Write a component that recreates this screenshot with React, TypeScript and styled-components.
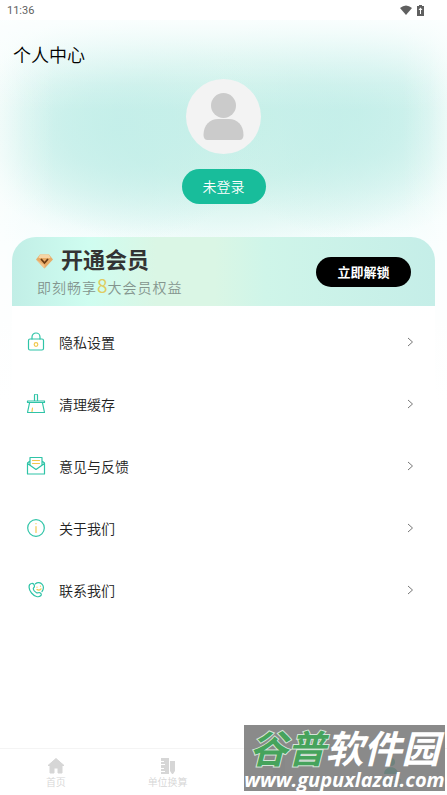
import React from 'react';
import styled, { createGlobalStyle } from 'styled-components';

const GlobalStyle = createGlobalStyle`
  *, *::before, *::after { box-sizing: border-box; }
  html, body, #root { margin: 0; min-height: 100vh; }
  body {
    background: #fff;
    color: #111;
    font-family: Roboto, "Noto Sans CJK SC", sans-serif;
    font-weight: 350;
  }
  button { border: 0; padding: 0; font: inherit; cursor: pointer; }
  a { color: inherit; text-decoration: none; }
  h1, h2, p { margin: 0; }
`;

const Screen = styled.div`
  position: relative;
  min-height: 100vh;
  display: flex;
  flex-direction: column;
`;

const StatusBar = styled.header`
  height: 20px;
  padding: 0 23px 0 7px;
  display: flex;
  align-items: center;
  justify-content: space-between;
  background: #fff;
  color: #5f5f5f;
  font-size: 11px;
  font-weight: 400;
`;

const StatusIcons = styled.div`
  display: flex;
  align-items: center;
  gap: 5px;
`;

const Main = styled.main`
  flex: 1;
  background:
    linear-gradient(180deg, rgba(252, 255, 255, 0.9), rgba(252, 255, 255, 0.5) 32px, rgba(252, 255, 255, 0.15) 65px, rgba(252, 255, 255, 0) 90px),
    linear-gradient(90deg, rgba(255, 255, 255, 0.5), rgba(255, 255, 255, 0.2) 24px, rgba(255, 255, 255, 0) 55px),
    linear-gradient(270deg, rgba(255, 255, 255, 0.5), rgba(255, 255, 255, 0.2) 18px, rgba(255, 255, 255, 0) 44px),
    radial-gradient(ellipse 34% 115px at 26% 108px, rgba(194, 238, 233, 0.8), rgba(194, 238, 233, 0.65) 35%, rgba(194, 238, 233, 0.25) 72%, rgba(194, 238, 233, 0)),
    radial-gradient(ellipse 34% 130px at 80% 90px, rgba(194, 238, 233, 0.8), rgba(194, 238, 233, 0.65) 35%, rgba(194, 238, 233, 0.25) 72%, rgba(194, 238, 233, 0)),
    radial-gradient(ellipse 56% 135px at 51% 100px, rgba(196, 239, 230, 0.9), rgba(196, 239, 230, 0.75) 45%, rgba(196, 239, 230, 0.3) 78%, rgba(196, 239, 230, 0)),
    linear-gradient(180deg, #eefaf8, #effbf9 140px, #f8fefe 225px, #fcfefe 300px, #fff 380px);
`;

const Title = styled.h1`
  padding: 22px 13px 0;
  font-size: 18px;
  line-height: 28px;
  font-weight: 350;
  color: #000;
`;

const Profile = styled.section`
  display: flex;
  flex-direction: column;
  align-items: center;
  gap: 15px;
  padding-top: 9px;
`;

const LoginButton = styled.button`
  width: 84px;
  height: 35px;
  border-radius: 18px;
  background: #18bd9b;
  color: #fff;
  font-size: 14px;
  line-height: 34px;
  font-weight: 350;
`;

const Card = styled.section`
  margin: 33px 12px 0;
  border-radius: 24px 24px 0 0;
  overflow: hidden;
`;

const Banner = styled.div`
  height: 69px;
  padding: 0 24px;
  display: flex;
  align-items: center;
  justify-content: space-between;
  background: linear-gradient(90deg, #c1eee6, #cffdf0 18%, #daf6e5 34%, #daf6e5 48%, #cff5e9 60%, #c5eee8);
`;

const Offer = styled.div`
  display: flex;
  flex-direction: column;
  padding-top: 2px;
`;

const OfferTitle = styled.h2`
  display: flex;
  align-items: center;
  gap: 8px;
  font-size: 22px;
  line-height: 28px;
  font-weight: 700;
  color: #333;
`;

const OfferText = styled.p`
  padding-left: 1px;
  font-size: 14px;
  line-height: 20px;
  color: #84958e;
  letter-spacing: 1px;
`;

const Count = styled.span`
  font-family: "Noto Sans CJK SC", sans-serif;
  font-size: 19px;
  font-weight: 400;
  line-height: 20px;
  color: #e0cc60;
  letter-spacing: 0;
`;

const UnlockButton = styled.button`
  width: 95px;
  height: 30px;
  border-radius: 15px;
  background: #000;
  color: #fff;
  font-size: 13px;
  font-weight: 700;
`;

const Menu = styled.nav`
  padding: 5px 0;
  background: rgba(255, 255, 255, 0.8);
`;

const MenuRow = styled.a`
  height: 62px;
  padding: 0 21px 0 14px;
  display: flex;
  align-items: center;
  gap: 13px;
  font-size: 14px;
  color: #222;
`;

const MenuLabel = styled.span`
  flex: 1;
`;

const TabBar = styled.nav`
  height: 47px;
  display: grid;
  grid-template-columns: repeat(4, 1fr);
  border-top: 1px solid #f4f4f4;
  background: #fff;
`;

const Tab = styled.a<{ $active?: boolean }>`
  display: flex;
  flex-direction: column;
  align-items: center;
  padding-top: 8px;
  font-size: 10px;
  line-height: 16px;
  color: ${p => (p.$active ? '#18bd9b' : '#d6d6d6')};
`;

const Watermark = styled.aside`
  position: absolute;
  right: 2px;
  bottom: 4px;
  width: 201px;
  height: 66px;
  padding-top: 5px;
  display: flex;
  flex-direction: column;
  align-items: center;
  background: rgba(122, 122, 122, 0.88);
  color: #fff;
  font-style: italic;
  white-space: nowrap;
`;

const SiteName = styled.div`
  font-size: 38px;
  line-height: 41px;
  font-weight: 700;
`;

const SiteGreen = styled.span`
  color: #46a35c;
  -webkit-text-stroke: 2px #d4e4d8;
  paint-order: stroke fill;
`;

const SiteUrl = styled.div`
  font-family: "Open Sans", sans-serif;
  font-size: 20px;
  line-height: 18px;
  font-weight: 700;
`;

const Wifi = () => (
  <svg width="12" height="10" viewBox="0 0 12 10" fill="#606060"><path d="M0 3Q6-2 12 3L6 10Z" /></svg>
);

const Battery = () => (
  <svg width="7" height="11" viewBox="0 0 7 11">
    <path d="M2 0h3v1h2v10H0V1h2z" fill="#606060" />
    <path d="M3.500 2.500L1.500 5H3v4h1V5h1.500z" fill="#fff" />
  </svg>
);

const Avatar = () => (
  <svg width="75" height="75" viewBox="0 0 75 75" role="img" aria-label="头像">
    <circle cx="37.5" cy="37.5" r="37.5" fill="#f3f3f3" />
    <circle cx="37.5" cy="26.5" r="12.5" fill="#cbcbcb" />
    <path d="M17.5 56C17.5 46 24 40 32 40h11c8 0 14.500 6 14.500 16 0 3-1.500 5-4 5h-32c-2.500 0-4-2-4-5z" fill="#cbcbcb" />
  </svg>
);

const Diamond = () => (
  <svg width="17" height="15" viewBox="0 0 17 15">
    <path d="M4 0.500h9l4 5-8.500 9L0 5.500z" fill="#e8ac68" />
    <path d="M4 0.500h9l1.500 3.500h-12z" fill="#f6d4a4" />
    <path d="M0 5.500l8.500 9V11z" fill="#f3c38c" />
    <path d="M5 5l3.500 4L12 5" fill="none" stroke="#6b3b14" strokeWidth="1.800" />
  </svg>
);

const line = { fill: 'none', stroke: '#2fc4a7', strokeWidth: 1.2, strokeLinecap: 'round', strokeLinejoin: 'round' } as const;
const gold = { ...line, stroke: '#f2c84f' };

const LockIcon = () => (
  <svg width="20" height="20" viewBox="0 0 20 20" {...line}>
    <rect x="2.500" y="7" width="15" height="11" rx="1.500" />
    <path d="M6 7V5a4 4 0 0 1 8 0v2" />
    <circle cx="10" cy="12.500" r="1.800" {...gold} />
  </svg>
);

const BrushIcon = () => (
  <svg width="20" height="20" viewBox="0 0 20 20" {...line}>
    <path d="M8.500 7V1.500a1.500 1.500 0 0 1 3 0V7M1.500 7h17v1.500h-17zM3.500 9L1.500 18.500h17L16.500 9" />
    <path d="M6.500 14L6 17.500" {...gold} />
  </svg>
);

const MailIcon = () => (
  <svg width="20" height="20" viewBox="0 0 20 20" {...line}>
    <path d="M4 5L1.500 7v11h17V7L16 5M1.500 7.500L10 13.500l8.500-6M4 9V1.500h12V9" />
    <path d="M6.500 4.500h7M6.500 7.500h7" {...gold} />
  </svg>
);

const InfoIcon = () => (
  <svg width="20" height="20" viewBox="0 0 20 20" {...line}>
    <circle cx="10" cy="10" r="8.300" />
    <path d="M10 5.500v.200M10 8.500v6" {...gold} />
  </svg>
);

const PhoneIcon = () => (
  <svg width="20" height="20" viewBox="0 0 20 20" {...line}>
    <path d="M5.500 3.500C2 4 2.500 9.500 5.500 13S12.500 18 15 15.500c.800-1 0-2.200-1-2.700-1.500-.800-2 .700-3.500 0C9 12 7.500 10.500 7.300 9 7 7.500 8.800 7.500 8.500 6S7 3.200 5.500 3.500z" />
    <path d="M9.500 3.800C11.500 2 14.500 2.500 16.200 4.300s1.600 5.200-.200 7.200" />
    <path d="M11 7v.200M14.500 6v.200M11 9.500c1.500 1 3 .500 4-.700" {...gold} />
  </svg>
);

const Chevron = () => (
  <svg width="7" height="10" viewBox="0 0 7 10" fill="none" stroke="#777" strokeWidth="1"><path d="M1 1l4.500 4L1 9" /></svg>
);

const HomeIcon = () => (
  <svg width="18" height="18" viewBox="0 0 18 18" fill="currentColor" stroke="currentColor" strokeLinejoin="round"><path d="M9 1.500l8 7h-2V16h-4v-5H7v5H3V8.500H1z" /></svg>
);

const ConvertIcon = () => (
  <svg width="18" height="18" viewBox="0 0 18 18" fill="currentColor">
    <path d="M2 1h8v16H2v-2h4v-1H2v-2h3v-1H2V8h4V7H2V5h3V4H2z" /><path d="M11 4h5v10l-2 3h-1l-2-3z" />
  </svg>
);

const RecordIcon = () => (
  <svg width="18" height="18" viewBox="0 0 18 18" fill="currentColor" opacity="0.5"><path d="M3 1h12v16H3z" /></svg>
);

const PersonIcon = () => (
  <svg width="18" height="18" viewBox="0 0 18 18" fill="currentColor"><circle cx="9" cy="5" r="4" /><path d="M2 17c0-9 14-9 14 0z" /></svg>
);

const menuItems = [
  { label: '隐私设置', icon: <LockIcon /> },
  { label: '清理缓存', icon: <BrushIcon /> },
  { label: '意见与反馈', icon: <MailIcon /> },
  { label: '关于我们', icon: <InfoIcon /> },
  { label: '联系我们', icon: <PhoneIcon /> },
];

export default function App() {
  return (
    <Screen>
      <GlobalStyle />
      <StatusBar>
        <time>11:36</time>
        <StatusIcons><Wifi /><Battery /></StatusIcons>
      </StatusBar>
      <Main>
        <Title>个人中心</Title>
        <Profile>
          <Avatar />
          <LoginButton type="button">未登录</LoginButton>
        </Profile>
        <Card>
          <Banner>
            <Offer>
              <OfferTitle><Diamond />开通会员</OfferTitle>
              <OfferText>即刻畅享<Count>8</Count>大会员权益</OfferText>
            </Offer>
            <UnlockButton type="button">立即解锁</UnlockButton>
          </Banner>
          <Menu>
            {menuItems.map(item => (
              <MenuRow href="#" key={item.label}>
                {item.icon}
                <MenuLabel>{item.label}</MenuLabel>
                <Chevron />
              </MenuRow>
            ))}
          </Menu>
        </Card>
      </Main>
      <TabBar>
        <Tab href="#"><HomeIcon />首页</Tab>
        <Tab href="#"><ConvertIcon />单位换算</Tab>
        <Tab href="#" aria-label="记录"><RecordIcon /></Tab>
        <Tab href="#" $active><PersonIcon />我的</Tab>
      </TabBar>
      <Watermark>
        <SiteName><SiteGreen>谷普</SiteGreen>软件园</SiteName>
        <SiteUrl>www.gupuxlazal.com</SiteUrl>
      </Watermark>
    </Screen>
  );
}
